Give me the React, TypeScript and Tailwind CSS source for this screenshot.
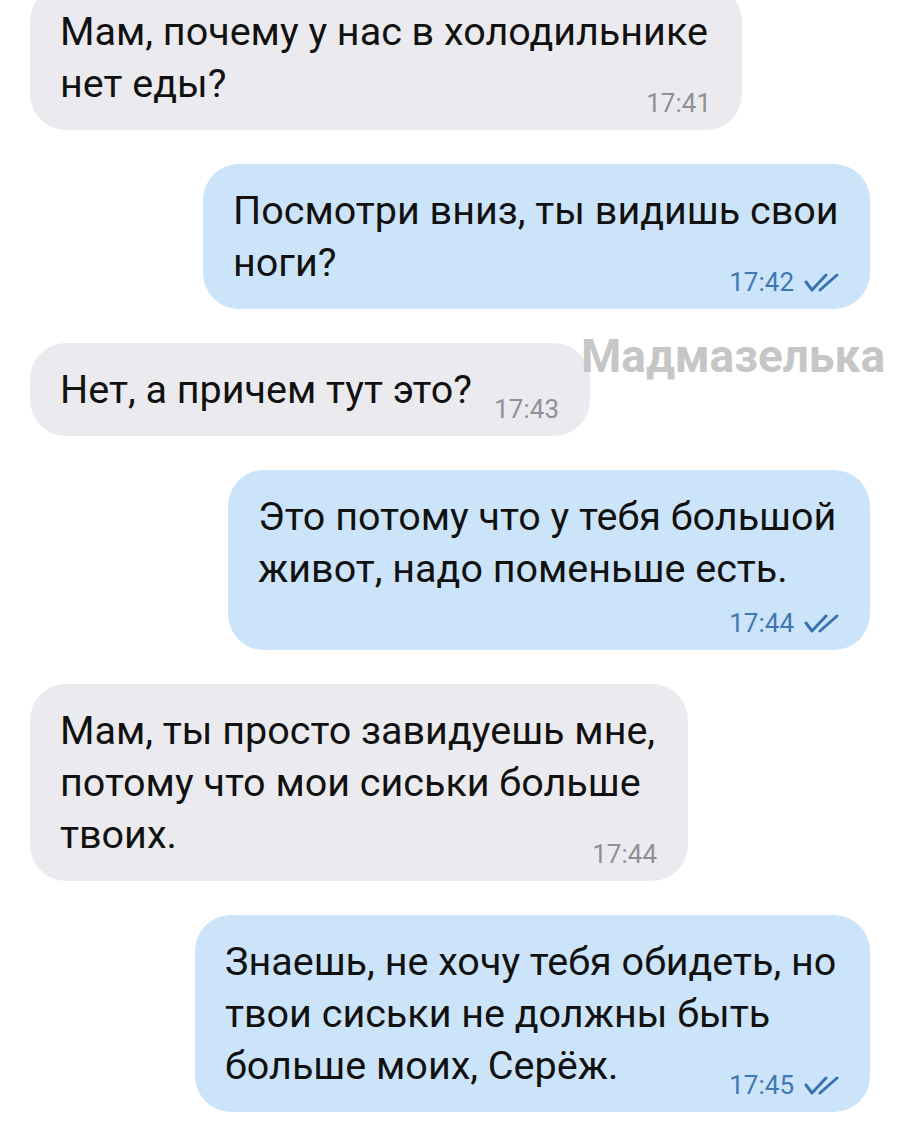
import React from 'react'

type Msg = {
  out: boolean
  lines: string[]
  time: string
  width: string
  timeOwnLine?: boolean
}

const messages: Msg[] = [
  { out: false, lines: ['Мам, почему у нас в холодильнике', 'нет еды?'], time: '17:41', width: 'w-[712px]' },
  { out: true, lines: ['Посмотри вниз, ты видишь свои', 'ноги?'], time: '17:42', width: 'w-[667px]' },
  { out: false, lines: ['Нет, а причем тут это?'], time: '17:43', width: 'w-[560px]' },
  { out: true, lines: ['Это потому что у тебя большой', 'живот, надо поменьше есть.'], time: '17:44', width: 'w-[642px]', timeOwnLine: true },
  { out: false, lines: ['Мам, ты просто завидуешь мне,', 'потому что мои сиськи больше', 'твоих.'], time: '17:44', width: 'w-[658px]' },
  { out: true, lines: ['Знаешь, не хочу тебя обидеть, но', 'твои сиськи не должны быть', 'больше моих, Серёж.'], time: '17:45', width: 'w-[675px]' },
]

// двойная галочка "прочитано"
function DoubleCheck() {
  return (
    <svg width="35" height="19" viewBox="0 0 35 19" fill="none" stroke="#3a72b2" strokeWidth="3" strokeLinecap="round" strokeLinejoin="round">
      <path d="M2 9 L8 17 L22 2" />
      <path d="M16 17 L33 2" />
    </svg>
  )
}

function Bubble({ m }: { m: Msg }) {
  return (
    <div
      className={`${m.width} rounded-[36px] pl-[30px] pr-[31px] pt-[21px] pb-[14px] ${
        m.out ? 'self-end bg-[#cce4f9]' : 'self-start bg-[#ebebef]'
      }`}
    >
      <div className="text-[39.5px] leading-[52px] text-[#111]">
        {m.lines.map((l, i) => (
          <div key={i} className="whitespace-nowrap">
            {l}
          </div>
        ))}
      </div>
      <div className={`flex items-center justify-end gap-[10px] ${m.timeOwnLine ? 'mt-[15px]' : '-mt-[20px]'}`}>
        <span className={`text-[26px] leading-[26px] ${m.out ? 'text-[#3f77b3]' : 'text-[#909094]'}`}>{m.time}</span>
        {m.out && <DoubleCheck />}
      </div>
    </div>
  )
}

export default function App() {
  return (
    <div className="h-[1125px] w-[900px] overflow-hidden bg-white" style={{ fontFamily: 'Roboto, "Noto Sans", sans-serif' }}>
      <div className="-mt-[15px] flex flex-col gap-[34px] px-[30px]">
        {messages.map((m, i) => (
          <div key={i} className="relative flex flex-col">
            <Bubble m={m} />
            {i === 2 && (
              <div className="absolute right-[-15px] top-[-10px] text-[46px] font-bold leading-none text-[#c6c6c6]">
                Мадмазелька
              </div>
            )}
          </div>
        ))}
      </div>
    </div>
  )
}
